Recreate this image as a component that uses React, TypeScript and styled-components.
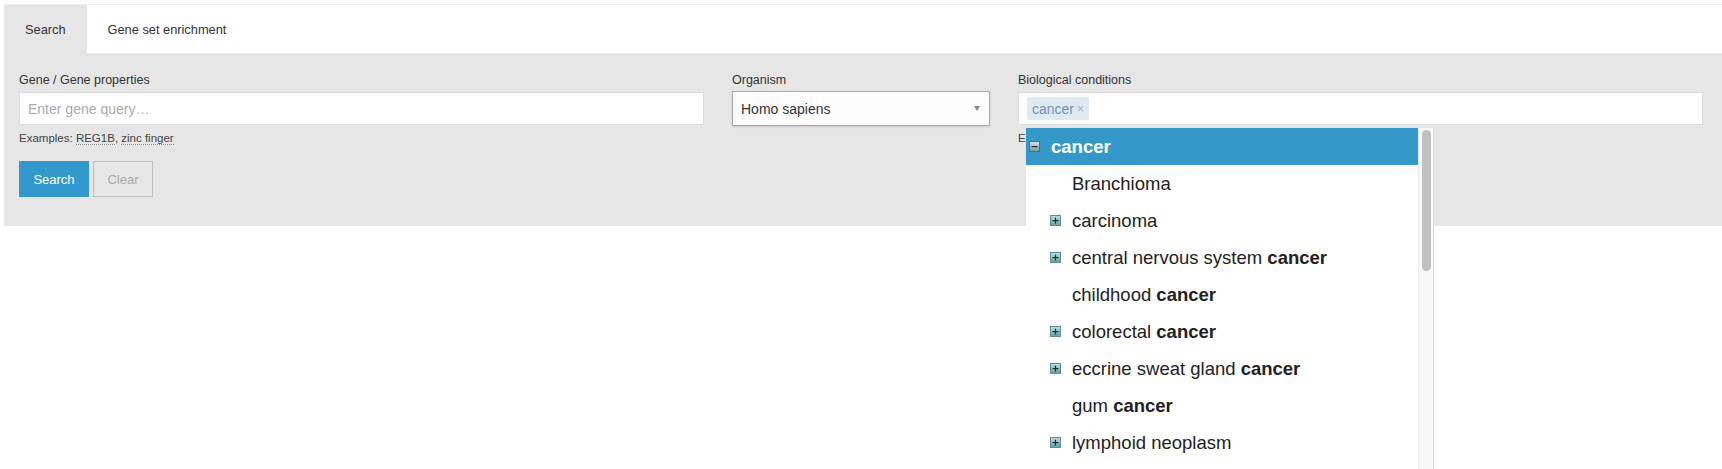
import { createGlobalStyle, styled } from "styled-components";

const GlobalStyle = createGlobalStyle`
  html, body {
    margin: 0;
    padding: 0;
    background: #ffffff;
    font-family: "Liberation Sans", Arial, sans-serif;
    color: #333;
  }
`;

const Page = styled.div`
  box-sizing: border-box;
  height: 100vh;
  overflow: hidden;
  padding: 4px 0 0 4px;
`;

const Shell = styled.div`
  border-top: 1px solid #eeeeee;
`;

const TabBar = styled.div`
  display: flex;
  height: 48px;
  background: #ffffff;
`;

const Tab = styled.div<{ $active?: boolean }>`
  display: flex;
  align-items: center;
  padding: 0 21px;
  font-size: 12.8px;
  color: #333;
  background: ${({ $active }) => ($active ? "#e6e6e6" : "transparent")};
`;

const FormPanel = styled.div`
  background: #e6e6e6;
  height: 173px;
  box-sizing: border-box;
  padding: 19px 19px 0 15px;
  display: grid;
  grid-template-columns: minmax(0, 1fr) 258px minmax(0, 1fr);
  column-gap: 28px;
  align-items: start;
`;

const Field = styled.div`
  position: relative;
  display: flex;
  flex-direction: column;
`;

const Label = styled.label`
  font-size: 12.5px;
  line-height: 16px;
  color: #333;
  margin-bottom: 4px;
`;

const TextInput = styled.div`
  height: 33px;
  box-sizing: border-box;
  background: #ffffff;
  border: 1px solid #dcdcdc;
  display: flex;
  align-items: center;
  padding: 0 8px;
  font-size: 14px;
`;

const Placeholder = styled.span`
  color: #aaaaaa;
`;

const Select = styled.div`
  height: 35px;
  margin-top: -1px;
  box-sizing: border-box;
  background: #fdfdfd;
  border: 1px solid #a9a9a9;
  box-shadow: 0 1px 2px rgba(0, 0, 0, 0.12);
  display: flex;
  align-items: center;
  justify-content: space-between;
  padding: 0 9px 0 8px;
  font-size: 14px;
  color: #333;
`;

const Caret = styled.span`
  width: 0;
  height: 0;
  border-left: 3.5px solid transparent;
  border-right: 3.5px solid transparent;
  border-top: 5px solid #8a8a8a;
`;

const Hint = styled.div`
  font-size: 11.5px;
  line-height: 14px;
  color: #444;
  margin-top: 6px;
`;

const HintLink = styled.span`
  border-bottom: 1px dotted #888;
`;

const Buttons = styled.div`
  display: flex;
  gap: 4px;
  margin-top: 16px;
`;

const Button = styled.button<{ $primary?: boolean }>`
  height: 36px;
  box-sizing: border-box;
  padding: 0;
  font-family: inherit;
  font-size: 13px;
  border: 1px solid ${({ $primary }) => ($primary ? "#3399cc" : "#bdbdbd")};
  background: ${({ $primary }) => ($primary ? "#3399cc" : "#e6e6e6")};
  color: ${({ $primary }) => ($primary ? "#ffffff" : "#aaaaaa")};
  width: ${({ $primary }) => ($primary ? "70px" : "60px")};
`;

const TagInput = styled.div`
  height: 33px;
  box-sizing: border-box;
  background: #ffffff;
  border: 1px solid #dcdcdc;
  display: flex;
  align-items: center;
  padding: 0 8px;
`;

const Tag = styled.span`
  display: inline-flex;
  align-items: center;
  gap: 3px;
  height: 23px;
  padding: 0 5px;
  border-radius: 2px;
  background: #dfe9f2;
  color: #7093b2;
  font-size: 14px;
`;

const TagClose = styled.span`
  color: #9fb3c4;
  font-size: 12px;
`;

const Dropdown = styled.div`
  position: absolute;
  left: 8px;
  top: 56px;
  width: 408px;
  height: 360px;
  display: flex;
  background: #ffffff;
  overflow: hidden;
  z-index: 5;
`;

const List = styled.ul`
  list-style: none;
  margin: 0;
  padding: 0;
  flex: 1;
`;

const Row = styled.li<{ $level: number; $selected?: boolean }>`
  display: flex;
  align-items: center;
  height: 37px;
  padding-left: ${({ $level }) => ($level === 0 ? 3 : 24)}px;
  font-size: 18.5px;
  color: ${({ $selected }) => ($selected ? "#ffffff" : "#222")};
  background: ${({ $selected }) => ($selected ? "#3498c9" : "transparent")};
  font-weight: ${({ $selected }) => ($selected ? "bold" : "normal")};
`;

const IconSlot = styled.span`
  width: 11px;
  height: 11px;
  margin-right: 11px;
  display: inline-flex;
`;

const Match = styled.b`
  font-weight: bold;
`;

const ScrollTrack = styled.div`
  width: 16px;
  box-sizing: border-box;
  background: #f8f8f8;
  border-left: 1px solid #ececec;
  border-right: 1px solid #dddddd;
  padding: 2px 0 0 3px;
`;

const ScrollThumb = styled.div`
  width: 9px;
  height: 141px;
  border-radius: 5px;
  background: #c1c1c1;
`;

function TreeIcon({ open }: { open?: boolean }) {
  const id = open ? "tg-open" : "tg-closed";
  return (
    <svg width="11" height="11" viewBox="0 0 11 11">
      <defs>
        <linearGradient id={id} x1="0" y1="0" x2="0" y2="1">
          <stop offset="0" stopColor={open ? "#d8e6e4" : "#bfe1e3"} />
          <stop offset="1" stopColor={open ? "#6f9a98" : "#5f9fa6"} />
        </linearGradient>
      </defs>
      <rect
        x="0.5"
        y="0.5"
        width="10"
        height="10"
        fill={`url(#${id})`}
        stroke={open ? "#4d6f6e" : "#5c8d93"}
      />
      <rect x="2.5" y="5" width="6" height="1.2" fill="#1f2d30" />
      {!open && <rect x="4.9" y="2.6" width="1.2" height="6" fill="#1f2d30" />}
    </svg>
  );
}

type Term = { pre: string; match?: boolean; expandable?: boolean };

const terms: Term[] = [
  { pre: "Branchioma" },
  { pre: "carcinoma", expandable: true },
  { pre: "central nervous system ", match: true, expandable: true },
  { pre: "childhood ", match: true },
  { pre: "colorectal ", match: true, expandable: true },
  { pre: "eccrine sweat gland ", match: true, expandable: true },
  { pre: "gum ", match: true },
  { pre: "lymphoid neoplasm", expandable: true },
];

export default function App() {
  return (
    <Page>
      <GlobalStyle />
      <Shell>
        <TabBar>
          <Tab $active>Search</Tab>
          <Tab>Gene set enrichment</Tab>
        </TabBar>
        <FormPanel>
          <Field>
            <Label>Gene / Gene properties</Label>
            <TextInput>
              <Placeholder>Enter gene query…</Placeholder>
            </TextInput>
            <Hint>
              Examples: <HintLink>REG1B</HintLink>, <HintLink>zinc finger</HintLink>
            </Hint>
            <Buttons>
              <Button $primary>Search</Button>
              <Button>Clear</Button>
            </Buttons>
          </Field>
          <Field>
            <Label>Organism</Label>
            <Select>
              <span>Homo sapiens</span>
              <Caret />
            </Select>
          </Field>
          <Field>
            <Label>Biological conditions</Label>
            <TagInput>
              <Tag>
                cancer <TagClose>×</TagClose>
              </Tag>
            </TagInput>
            <Hint>Ex</Hint>
            <Dropdown>
              <List>
                <Row $level={0} $selected>
                  <IconSlot>
                    <TreeIcon open />
                  </IconSlot>
                  cancer
                </Row>
                {terms.map((t) => (
                  <Row key={t.pre} $level={1}>
                    <IconSlot>{t.expandable && <TreeIcon />}</IconSlot>
                    <span>
                      {t.pre}
                      {t.match && <Match>cancer</Match>}
                    </span>
                  </Row>
                ))}
              </List>
              <ScrollTrack>
                <ScrollThumb />
              </ScrollTrack>
            </Dropdown>
          </Field>
        </FormPanel>
      </Shell>
    </Page>
  );
}
